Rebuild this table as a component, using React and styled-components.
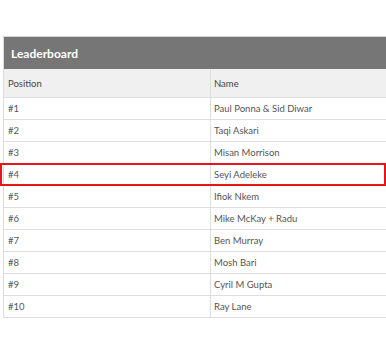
import React from 'react'
import styled, { createGlobalStyle } from 'styled-components'

const GlobalStyle = createGlobalStyle`
  html, body {
    margin: 0;
    padding: 0;
    background: #fff;
    overflow: hidden;
  }
  body {
    font-family: Lato, 'Open Sans', sans-serif;
  }
`

const Page = styled.div`
  width: 386px;
  height: 356px;
  padding: 36px 0 0 3px;
  box-sizing: border-box;
  overflow: hidden;
`

const Board = styled.div`
  width: 420px;
  border-top: 1px solid #d4d4d4;
  border-left: 1px solid #dcdcdc;
`

const TitleBar = styled.div`
  height: 32px;
  display: flex;
  align-items: center;
  padding-left: 7px;
  background: #767676;
  color: #fff;
  font-size: 12px;
  font-weight: 700;
`

const Row = styled.div`
  position: relative;
  display: grid;
  grid-template-columns: 206px 1fr;
  height: ${({ head }) => (head ? 28 : 21)}px;
  background: ${({ head }) => (head ? '#f0f0f0' : '#fff')};
  border-bottom: 1px solid #dedede;
  color: ${({ head }) => (head ? '#444' : '#555')};
  font-size: ${({ head }) => (head ? 9.5 : 9.5)}px;

  ${({ marked }) =>
    marked &&
    `
    &::after {
      content: '';
      position: absolute;
      left: -4px;
      top: -1px;
      width: 386px;
      height: 23px;
      box-sizing: border-box;
      border: 2px solid #e8141a;
      pointer-events: none;
    }
  `}
`

const Cell = styled.div`
  display: flex;
  align-items: center;
  padding-left: ${({ first }) => (first ? 4 : 3)}px;
  border-left: ${({ first }) => (first ? 'none' : '1px solid #dedede')};
`

const players = [
  'Paul Ponna & Sid Diwar',
  'Taqi Askari',
  'Misan Morrison',
  'Seyi Adeleke',
  'Ifiok Nkem',
  'Mike McKay + Radu',
  'Ben Murray',
  'Mosh Bari',
  'Cyril M Gupta',
  'Ray Lane',
]

const App = () => (
  <Page>
    <GlobalStyle />
    <Board>
      <TitleBar>Leaderboard</TitleBar>
      <Row head>
        <Cell first>Position</Cell>
        <Cell>Name</Cell>
      </Row>
      {players.map((name, index) => (
        <Row key={name} marked={index === 3}>
          <Cell first>#{index + 1}</Cell>
          <Cell>{name}</Cell>
        </Row>
      ))}
    </Board>
  </Page>
)

export default App
